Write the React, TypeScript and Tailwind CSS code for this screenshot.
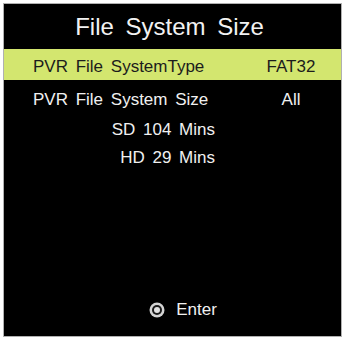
import React from 'react';

const font = { fontFamily: '"Liberation Sans", Arial, sans-serif' };

const EnterIcon: React.FC = () => (
  <svg width="16" height="16" viewBox="0 0 16 16">
    <circle cx="8" cy="8" r="7.5" fill="#d4d4d4" />
    <circle cx="8" cy="8" r="5" fill="#1a1a1a" />
    <circle cx="8" cy="8" r="3" fill="#e2e2e2" />
  </svg>
);

const App: React.FC = () => {
  return (
    <div className="w-[346px] h-[340px] bg-white pt-[3px] pl-[3px] pr-[4px] pb-[3px]" style={font}>
      <div className="h-full bg-black border border-[#b0b0b0] flex flex-col">
        {/* Title */}
        <div className="h-[45px] flex items-center justify-center pr-[6px] text-[24px] text-[#f2f2f2] [word-spacing:5px]">
          File System Size
        </div>

        {/* Selected row */}
        <div className="h-[31px] bg-[#d3e66f] flex items-center pt-[4px] text-[17px] text-[#1c1c1c]">
          <span className="pl-[29px] flex-1 [word-spacing:3px]">PVR File SystemType</span>
          <span className="w-[100px] text-center">FAT32</span>
        </div>

        <div className="h-[36px] flex items-center pt-[4px] text-[17px] text-[#f0f0f0]">
          <span className="pl-[29px] flex-1 [word-spacing:3px]">PVR File System Size</span>
          <span className="w-[100px] text-center">All</span>
        </div>

        <div className="h-[28px] flex items-center text-[17px] text-[#f0f0f0] [word-spacing:3px]">
          <span className="w-[211px] text-right">SD 104 Mins</span>
        </div>
        <div className="h-[28px] flex items-center text-[17px] text-[#f0f0f0] [word-spacing:3px]">
          <span className="w-[211px] text-right">HD 29 Mins</span>
        </div>

        <div className="flex-1" />

        {/* Footer hint */}
        <div className="h-[28px] mb-[12px] flex items-center justify-center pl-[21px] gap-[11px] text-[17px] text-[#f0f0f0]">
          <EnterIcon />
          <span>Enter</span>
        </div>
      </div>
    </div>
  );
};

export default App;
